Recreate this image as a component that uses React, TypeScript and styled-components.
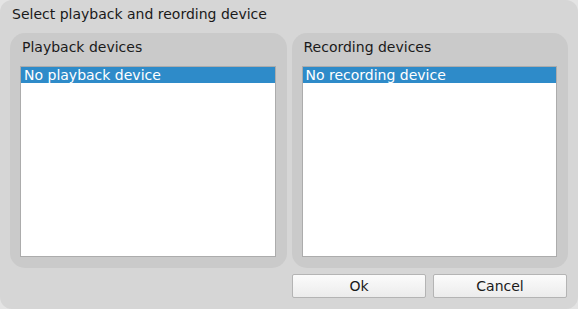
import React from 'react';
import styled, { createGlobalStyle } from 'styled-components';

const Global = createGlobalStyle`
  html, body {
    margin: 0;
    padding: 0;
    background: #e4e4e4;
  }
  body {
    font-family: 'DejaVu Sans', 'Noto Sans', sans-serif;
    font-size: 14px;
    color: #1a1a1a;
  }
`;

const devices = [
  { title: 'Playback devices', empty: 'No playback device' },
  { title: 'Recording devices', empty: 'No recording device' },
];

const App = () => {
  return (
    <>
      <Global />
      <Window>
        <Title>Select playback and reording device</Title>
        <Groups>
          {devices.map((d) => (
            <Group key={d.title}>
              <GroupLabel>{d.title}</GroupLabel>
              <List>
                <Row selected>{d.empty}</Row>
              </List>
            </Group>
          ))}
        </Groups>
        <Buttons>
          <Button>Ok</Button>
          <Button>Cancel</Button>
        </Buttons>
      </Window>
    </>
  );
};

export default App;

const Window = styled.div`
  width: 578px;
  height: 309px;
  box-sizing: border-box;
  background: #d6d6d6;
  border-radius: 12px;
  padding: 0 10px 11px 10px;
  display: flex;
  flex-direction: column;
`;

const Title = styled.div`
  height: 33px;
  padding: 6px 0 0 2px;
  box-sizing: border-box;
  line-height: 16px;
`;

const Groups = styled.div`
  display: grid;
  grid-template-columns: 1fr 1fr;
  gap: 5px;
  height: 235px;
`;

const Group = styled.div`
  background: #cacaca;
  border-radius: 15px;
  padding: 0 11px 11px 10px;
  display: flex;
  flex-direction: column;
`;

const GroupLabel = styled.div`
  height: 33px;
  padding: 6px 0 0 2px;
  box-sizing: border-box;
  line-height: 16px;
`;

const List = styled.div`
  flex: 1;
  background: #ffffff;
  border: 1px solid #acacac;
  padding: 0;
`;

const Row = styled.div<{ selected?: boolean }>`
  height: 16px;
  line-height: 16px;
  padding-left: 3px;
  background: ${(p) => (p.selected ? '#2e8bc9' : 'transparent')};
  color: ${(p) => (p.selected ? '#ffffff' : '#1a1a1a')};
  white-space: nowrap;
`;

const Buttons = styled.div`
  display: flex;
  justify-content: flex-end;
  gap: 7px;
  margin-top: 6px;
  padding-right: 1px;
`;

const Button = styled.button`
  width: 134px;
  height: 24px;
  box-sizing: border-box;
  border: 1px solid #b4b4b4;
  border-radius: 2px;
  background: linear-gradient(#fbfbfb, #ececec);
  font-family: 'DejaVu Sans', 'Noto Sans', sans-serif;
  font-size: 14px;
  color: #1a1a1a;
  padding: 0;
`;
